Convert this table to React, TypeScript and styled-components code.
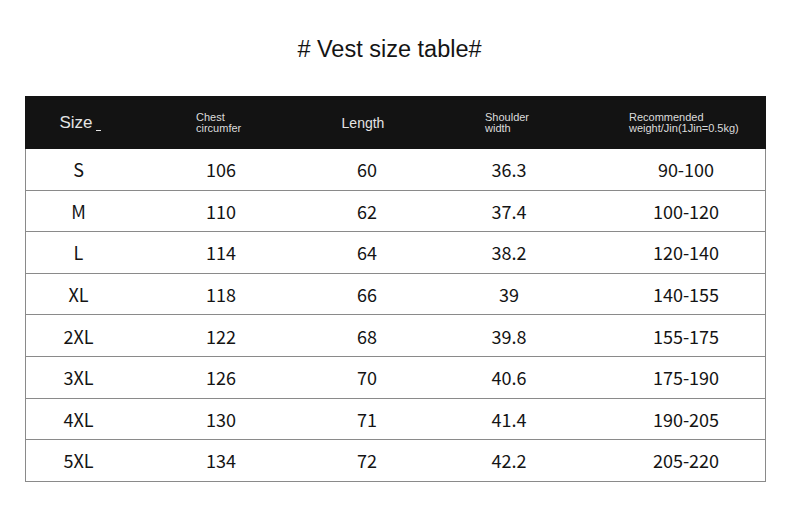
import React from "react";
import styled, { createGlobalStyle } from "styled-components";

const Global = createGlobalStyle`
  html, body { margin: 0; padding: 0; background: #ffffff; }
  body { font-family: "Liberation Sans", Arial, sans-serif; }
`;

const Page = styled.div`
  width: 790px;
  height: 510px;
  background: #ffffff;
  display: flex;
  flex-direction: column;
  align-items: stretch;
  padding: 35px 24px 0 25px;
  box-sizing: border-box;
`;

const Title = styled.h1`
  margin: 0 0 33px 0;
  text-align: center;
  font-family: "Liberation Sans", Arial, sans-serif;
  font-weight: 400;
  font-size: 23.5px;
  line-height: 28px;
  color: #141414;
  padding-right: 12px;
`;

const Table = styled.div`
  display: grid;
  grid-template-columns: 106px 180px 112px 172px 1fr;
  width: 741px;
`;

const HeaderCell = styled.div<{ $pad?: number; $center?: boolean }>`
  height: 53px;
  background: #131313;
  display: flex;
  align-items: center;
  justify-content: ${(p) => (p.$center ? "center" : "flex-start")};
  padding-left: ${(p) => p.$pad ?? 0}px;
  box-sizing: border-box;
  color: #e4e4e4;
`;

const BigLabel = styled.span<{ $size: number; $shift?: number }>`
  font-size: ${(p) => p.$size}px;
  line-height: 1;
  position: relative;
  left: ${(p) => p.$shift ?? 0}px;
  white-space: nowrap;
`;

const Under = styled.span`
  display: inline-block;
  width: 5px;
  height: 1px;
  background: #e4e4e4;
  margin-left: 3px;
  vertical-align: -3px;
`;

const SmallLabel = styled.span`
  display: flex;
  flex-direction: column;
  font-size: 11px;
  line-height: 10.5px;
  white-space: nowrap;
  color: #dcdcdc;
`;

const Cell = styled.div<{ $first?: boolean; $last?: boolean; $shift?: number }>`
  height: 41.6px;
  box-sizing: border-box;
  border-bottom: 1px solid #8a8a8a;
  border-left: ${(p) => (p.$first ? "1px solid #8a8a8a" : "none")};
  border-right: ${(p) => (p.$last ? "1px solid #8a8a8a" : "none")};
  display: flex;
  align-items: center;
  justify-content: center;
  padding-left: ${(p) => (p.$shift ?? 0) * 2}px;
  font-family: "Noto Sans CJK SC", "Noto Sans", sans-serif;
  font-size: 18px;
  color: #141414;
`;

const rows: string[][] = [
  ["S", "106", "60", "36.3", "90-100"],
  ["M", "110", "62", "37.4", "100-120"],
  ["L", "114", "64", "38.2", "120-140"],
  ["XL", "118", "66", "39", "140-155"],
  ["2XL", "122", "68", "39.8", "155-175"],
  ["3XL", "126", "70", "40.6", "175-190"],
  ["4XL", "130", "71", "41.4", "190-205"],
  ["5XL", "134", "72", "42.2", "205-220"],
];

export default function App() {
  return (
    <>
      <Global />
      <Page>
        <Title># Vest size table#</Title>
        <Table>
          <HeaderCell $center>
            <BigLabel $size={17} $shift={2}>
              Size
              <Under />
            </BigLabel>
          </HeaderCell>
          <HeaderCell $pad={65}>
            <SmallLabel>
              <span>Chest</span>
              <span>circumfer</span>
            </SmallLabel>
          </HeaderCell>
          <HeaderCell $center>
            <BigLabel $size={14} $shift={-4}>Length</BigLabel>
          </HeaderCell>
          <HeaderCell $pad={62}>
            <SmallLabel>
              <span>Shoulder</span>
              <span>width</span>
            </SmallLabel>
          </HeaderCell>
          <HeaderCell $pad={34}>
            <SmallLabel>
              <span>Recommended</span>
              <span>weight/Jin(1Jin=0.5kg)</span>
            </SmallLabel>
          </HeaderCell>
          {rows.map((r, i) =>
            r.map((v, j) => (
              <Cell
                key={`${i}-${j}`}
                $first={j === 0}
                $last={j === 4}
                $shift={j === 4 ? 6 : 0}
              >
                {v}
              </Cell>
            ))
          )}
        </Table>
      </Page>
    </>
  );
}
